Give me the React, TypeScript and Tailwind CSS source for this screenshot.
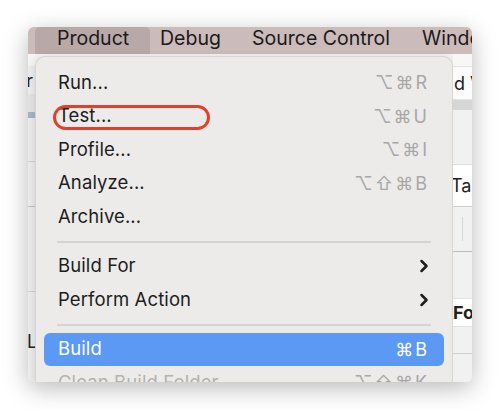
import { ChevronRight } from "lucide-react";

const font = { fontFamily: "Inter, 'Noto Sans', 'DejaVu Sans', sans-serif" };

interface Item {
  label: string;
  keys?: string;
  sub?: boolean;
  active?: boolean;
  disabled?: boolean;
}

const groups: Item[][] = [
  [
    { label: "Run...", keys: "⌥⌘R" },
    { label: "Test...", keys: "⌥⌘U" },
    { label: "Profile...", keys: "⌥⌘I" },
    { label: "Analyze...", keys: "⌥⇧⌘B" },
    { label: "Archive..." },
  ],
  [
    { label: "Build For", sub: true },
    { label: "Perform Action", sub: true },
  ],
  [
    { label: "Build", keys: "⌘B", active: true },
    { label: "Clean Build Folder", keys: "⌥⇧⌘K", disabled: true },
  ],
];

function MenuRow({ item }: { item: Item }) {
  return (
    <div
      className={`h-[33.5px] shrink-0 flex items-center justify-between pl-[14px] pr-[15px] rounded-[6px] whitespace-nowrap ${
        item.active
          ? "bg-[#5b99f4] text-white"
          : item.disabled
          ? "text-[#b3b2b1]"
          : "text-[#1d1d1d]"
      }`}
    >
      <span className="text-[18.5px] tracking-[0.1px]">{item.label}</span>
      {item.keys && (
        <span
          className={`text-[18px] tracking-[2px] ${
            item.active ? "text-white" : "text-[#a8a7a6]"
          }`}
        >
          {item.keys}
        </span>
      )}
      {item.sub && (
        <ChevronRight size={20} strokeWidth={3} className="text-[#1d1d1d] -mr-[5px]" />
      )}
    </div>
  );
}

export default function App() {
  return (
    <div className="relative w-[500px] h-[410px] bg-white overflow-hidden" style={font}>
      <div className="ml-[28px] mt-[27px] w-[444px] h-[355px] rounded-[6px] overflow-hidden flex flex-col bg-[#f3f3f3] shadow-[0_6px_24px_rgba(0,0,0,0.28)]">
        {/* menu bar */}
        <div className="h-[27px] shrink-0 flex items-center pb-[3px] bg-[#cbbbbb] text-[#1c1a1a] text-[19.5px] whitespace-nowrap overflow-hidden">
          <div className="ml-[7px] -mb-[3px] w-[115px] shrink-0 h-[27px] flex items-center pb-[3px] pl-[22px] bg-[#b8a8a8] rounded-t-[5px]">
            Product
          </div>
          <span className="ml-[10px] w-[92px] shrink-0">Debug</span>
          <span className="w-[170px] shrink-0">Source Control</span>
          <span className="shrink-0">Window</span>
        </div>

        <div className="flex-1 flex min-h-0">
          {/* left strip of background window */}
          <div className="w-[7px] shrink-0 flex flex-col bg-[#ececec] text-[18px] text-[#222] overflow-hidden">
            <div className="h-[12px] bg-[#f4f4f4]" />
            <div className="h-[28px] flex items-center -ml-[6px]">ır</div>
            <div className="h-[18px] bg-[#e4e4e4]" />
            <div className="h-[6px] bg-[#a9b3c2]" />
            <div className="h-[44px] border-b border-[#cfcfcf]" />
            <div className="h-[45px] border-b border-[#bdbdbd]" />
            <div className="h-[85px] border-b border-[#cfcfcf]" />
            <div className="h-[63px] flex items-end -ml-[1px]">L</div>
          </div>

          {/* menu */}
          <div className="w-[418px] shrink-0 mt-[2px] flex flex-col px-[8px] pt-[9px] bg-[#ecebea] rounded-t-[10px] border border-b-0 border-[#d6d5d4] shadow-[0_2px_8px_rgba(0,0,0,0.15)]">
            {groups.map((g, gi) => (
              <div key={gi} className="flex flex-col">
                {gi > 0 && (
                  <div className="h-[16px] shrink-0 flex items-center px-[13px]">
                    <div className="h-[2px] w-full bg-[#d5d4d3]" />
                  </div>
                )}
                {g.map((item) => (
                  <MenuRow key={item.label} item={item} />
                ))}
              </div>
            ))}
          </div>

          {/* right strip of background window */}
          <div className="w-[19px] shrink-0 flex flex-col bg-[#f1f1f1] text-[18px] text-[#222] overflow-hidden whitespace-nowrap">
            <div className="h-[12px] bg-[#f7f7f7]" />
            <div className="h-[34px] flex items-center bg-[#fbfbfb] border-y border-[#e2e2e2] pl-[1px]">d V</div>
            <div className="h-[10px] bg-[#d6d6d6]" />
            <div className="h-[55px] border-b border-[#dcdcdc]" />
            <div className="h-[42px] flex items-center bg-white border-b border-[#cfcfcf] -ml-[2px]">Tag</div>
            <div className="h-[45px] flex justify-center border-b border-[#bdbdbd]">
              <div className="w-[1px] h-[24px] mt-[10px] bg-[#d8d8d8]" />
            </div>
            <div className="h-[47px] border-b border-[#e3e3e3]" />
            <div className="h-[28px] flex items-center bg-white font-bold border-b border-[#e0e0e0]">Fo</div>
            <div className="h-[27px] border-b border-[#cfcfcf]" />
          </div>
        </div>
      </div>

      {/* red annotation oval */}
      <div className="absolute left-[53px] top-[105px] w-[157px] h-[25px] rounded-full border-[3px] border-[#e3402c]" />
    </div>
  );
}
